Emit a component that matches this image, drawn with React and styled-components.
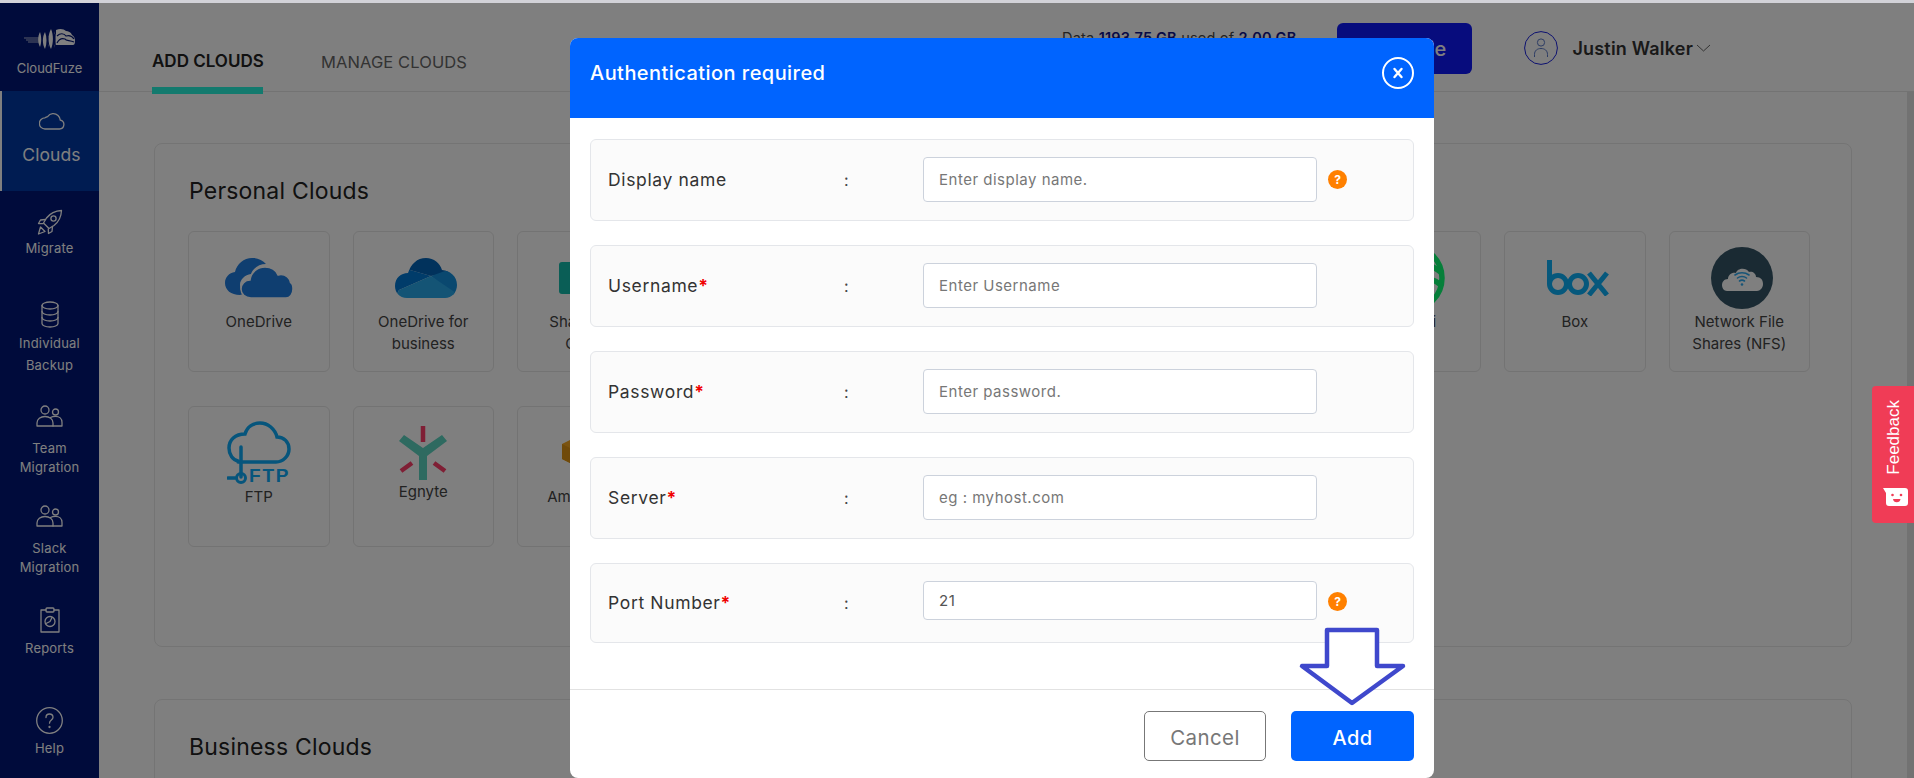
import React from 'react';
import styled, { createGlobalStyle } from 'styled-components';

const Global = createGlobalStyle`
  html, body { margin: 0; padding: 0; background: #fff; }
  body { font-family: Inter, "Noto Sans", sans-serif; color: #333; }
  * { box-sizing: border-box; }
`;

const Page = styled.div`
  position: relative;
  width: 1914px;
  height: 778px;
  overflow: hidden;
  display: flex;
  flex-direction: column;
`;

const TopStrip = styled.div`
  height: 3px;
  flex: none;
  background: #d2d2d8;
`;

const Shell = styled.div`
  flex: 1;
  display: flex;
  min-height: 0;
`;

const Sidebar = styled.nav`
  width: 99px;
  flex: none;
  background: #001676;
  color: #fff;
  display: flex;
  flex-direction: column;
  align-items: stretch;
`;

const LogoBlock = styled.div`
  height: 88px;
  padding-top: 25px;
  display: flex;
  flex-direction: column;
  align-items: center;
  gap: 10px;
  font-size: 13px;
  line-height: 16px;
`;

const ActiveItem = styled.div`
  height: 100px;
  border-left: 2px solid #fff;
  padding: 21px 0 0 2px;
  background: #0038a4;
  display: flex;
  flex-direction: column;
  align-items: center;
  gap: 14px;
  font-size: 17.5px;
  line-height: 21px;
  letter-spacing: 0.1px;
`;

const NavItem = styled.div`
  margin-top: ${p => p.$mt}px;
  display: flex;
  flex-direction: column;
  align-items: center;
  text-align: center;
  gap: ${p => p.$gap || 4}px;
  font-size: 13px;
  line-height: ${p => p.$lh || 19}px;
  letter-spacing: 0.2px;
`;

const Main = styled.div`
  flex: 1;
  min-width: 0;
  display: flex;
  flex-direction: column;
`;

const Header = styled.header`
  height: 89px;
  flex: none;
  border-bottom: 1px solid #e6e6e6;
  display: flex;
  align-items: flex-start;
  padding: 0 203px 0 53px;
`;

const Tab = styled.div`
  height: 91px;
  width: ${p => p.$w}px;
  margin-right: ${p => p.$mr || 0}px;
  padding-top: ${p => (p.$active ? 47 : 48)}px;
  font-size: ${p => (p.$active ? 17 : 16.5)}px;
  letter-spacing: ${p => (p.$active ? 0 : 0.1)}px;
  line-height: 22px;
  white-space: nowrap;
  color: ${p => (p.$active ? '#222' : '#666')};
  font-weight: ${p => (p.$active ? 600 : 400)};
  border-bottom: ${p => (p.$active ? '7px solid #26f4dc' : 'none')};
  position: relative;
  z-index: 1;
`;

const DataUse = styled.div`
  margin-left: auto;
  margin-top: 26px;
  font-size: 14.5px;
  line-height: 18px;
  color: #444;
  white-space: nowrap;
  letter-spacing: 0.2px;
  b { color: #10148c; font-weight: 600; }
`;

const UpgradeBtn = styled.button`
  margin: 20px 52px 0 41px;
  width: 135px;
  height: 51px;
  border: none;
  border-radius: 6px;
  background: #0e18fa;
  color: #fff;
  font: 500 20px Inter, sans-serif;
`;

const UserBox = styled.div`
  margin-top: 28px;
  display: flex;
  align-items: center;
  height: 34px;
  gap: 14px;
  font-size: 18px;
  font-weight: 600;
  color: #333;
  letter-spacing: 0.2px;
  span { display: inline-flex; align-items: center; gap: 3px; white-space: nowrap; }
`;

const Body = styled.div`
  flex: 1;
  display: flex;
  min-height: 0;
`;

const Content = styled.div`
  flex: 1;
  min-width: 0;
  padding: 51px 55px 0;
  display: flex;
  flex-direction: column;
  gap: 52px;
`;

const Scrollbar = styled.div`
  width: 7px;
  flex: none;
  background: #e4e4e4;
`;

const Panel = styled.section`
  flex: none;
  height: ${p => p.$h}px;
  border: 1px solid #e8e8e8;
  border-radius: 8px;
  padding: 30px 33px 0;
`;

const PanelTitle = styled.h2`
  margin: 0 0 23px 1px;
  font-size: 23px;
  line-height: 34px;
  font-weight: 400;
  color: #222;
  letter-spacing: 0.2px;
`;

const CardGrid = styled.div`
  display: grid;
  grid-template-columns: repeat(10, 141.5px);
  grid-auto-rows: 141px;
  column-gap: 23px;
  row-gap: 34px;
`;

const Card = styled.div`
  border: 1px solid #e6e6e6;
  border-radius: 6px;
  padding-top: 14px;
  display: flex;
  flex-direction: column;
  align-items: center;
  text-align: center;
`;

const CardIcon = styled.div`
  height: 63px;
  flex: none;
  display: flex;
  align-items: center;
  justify-content: center;
  margin-left: ${p => p.$dx || 0}px;
  margin-bottom: ${p => (p.$mb === undefined ? 2 : p.$mb)}px;
`;

const CardLabel = styled.div`
  font-size: 15px;
  line-height: 22px;
  color: #444;
  width: 124px;
`;

const Dim = styled.div`
  position: absolute;
  left: 0;
  right: 0;
  top: 3px;
  bottom: 0;
  background: rgba(0, 0, 0, 0.5);
  z-index: 5;
`;

const Modal = styled.div`
  position: absolute;
  left: 570px;
  top: 38px;
  width: 864px;
  height: 740px;
  background: #fff;
  border-radius: 8px;
  z-index: 6;
  display: flex;
  flex-direction: column;
  overflow: hidden;
`;

const ModalHead = styled.div`
  height: 80px;
  flex: none;
  background: #0064ff;
  color: #fff;
  padding: 0 20px 10px;
  display: flex;
  align-items: center;
  justify-content: space-between;
  font-size: 20px;
  font-weight: 500;
  letter-spacing: 0.45px;
`;

const CloseBtn = styled.button`
  width: 32px;
  height: 32px;
  padding: 0;
  border: 2.5px solid #fff;
  border-radius: 50%;
  background: none;
  display: flex;
  align-items: center;
  justify-content: center;
`;

const ModalBody = styled.div`
  flex: 1;
  padding: 21px 20px 0;
  display: flex;
  flex-direction: column;
  gap: 24px;
`;

const FieldRow = styled.div`
  height: ${p => (p.$compact ? 80 : 82)}px;
  flex: none;
  padding: 0 16px 0 17px;
  background: #fbfbfb;
  border: 1px solid #e4e6ea;
  border-radius: 6px;
  display: grid;
  grid-template-columns: 236px 79px 394px 20px;
  align-items: center;
`;

const FieldLabel = styled.div`
  font-size: 17.5px;
  line-height: 22px;
  color: #333;
  letter-spacing: 0.65px;
  white-space: nowrap;
  i { color: #f00000; font-style: normal; font-weight: 700; }
`;

const Colon = styled.div`
  font-size: 16px;
  color: #444;
`;

const TextInput = styled.input`
  width: 394px;
  height: ${p => (p.$compact ? 39 : 45)}px;
  margin-top: ${p => (p.$compact ? -5 : -1)}px;
  padding: 0 12px 0 15px;
  border: 1px solid #ccd2dc;
  border-radius: 4px;
  background: #fff;
  outline: none;
  font: 400 15px Inter, sans-serif;
  letter-spacing: 0.5px;
  color: #555;
  &::placeholder { color: #777; opacity: 1; }
`;

const HelpDot = styled.div`
  width: 19px;
  height: 19px;
  margin: ${p => (p.$compact ? -4 : -2)}px 0 0 11px;
  border-radius: 50%;
  background: #ff8000;
  color: #fff;
  font-size: 12px;
  font-weight: 700;
  line-height: 19px;
  text-align: center;
`;

const ModalFoot = styled.div`
  height: 89px;
  flex: none;
  border-top: 1px solid #e2e2e2;
  padding: 21px 20px 0;
  display: flex;
  justify-content: flex-end;
  gap: 25px;
`;

const FootBtn = styled.button`
  width: ${p => (p.$primary ? 123 : 122)}px;
  height: 50px;
  padding: 3px 0 0;
  border-radius: 5px;
  border: ${p => (p.$primary ? 'none' : '1px solid #777')};
  background: ${p => (p.$primary ? '#0064ff' : '#fff')};
  color: ${p => (p.$primary ? '#fff' : '#777')};
  font: ${p => (p.$primary ? '500 20px' : '400 20.5px')} Inter, sans-serif;
  letter-spacing: 0.4px;
`;

const ArrowMark = styled.svg`
  position: absolute;
  left: 728px;
  top: 588px;
`;

const Feedback = styled.div`
  position: absolute;
  right: 0;
  top: 386px;
  width: 42px;
  height: 137px;
  z-index: 7;
  background: #f03c56;
  border-radius: 4px 0 0 4px;
  padding: 14px 0 0 11px;
  display: flex;
  flex-direction: column;
  align-items: flex-start;
  gap: 13px;
  color: #fff;
  font: 400 17px/21px "Liberation Sans", Arial, sans-serif;
`;

const FeedbackText = styled.span`
  writing-mode: vertical-rl;
  transform: rotate(180deg);
`;

const stroke = { fill: 'none', stroke: 'currentColor', strokeWidth: 1.3, strokeLinecap: 'round', strokeLinejoin: 'round' };

const Logo = () => (
  <svg width="52" height="22" viewBox="0 0 52 22">
    <g stroke="#fff" strokeWidth="0.7">
      <path d="M0 10h15M2 12h13M4 14h11" />
    </g>
    <g fill="#fff">
      <path d="M16 4c-2.400 4-2.400 11 0 15 1.600-4 1.600-11 0-15z" />
      <path d="M21 4c-2.800 5-2.800 12 0 17 2-5 2-12 0-17zM24 6c1.600 4 1.600 10 0 14 2-4 2-10 0-14z" />
      <path d="M27 1c-3.200 6-3.200 14 0 20 2.600-6 2.600-14 0-20zM30 3c2 5 2 12 0 17 2.600-5 2.600-12 0-17z" />
      <path d="M32 2c4-2 8-1 10 1 2 0 5 1 6 4 2 1 3 3 3 6s-1 4-2 4H32z" />
    </g>
    <g fill="none" stroke="#001676" strokeWidth="1.2">
      <path d="M33 8c3-3 7-3 9 0 3-1 6 0 8 3" />
      <path d="M33 15c2-4 5-5 8-4 1 2 5 1 9 3" />
    </g>
  </svg>
);

const CloudLine = () => (
  <svg width="26" height="18" viewBox="0 0 26 18" {...stroke}>
    <path d="M6 17h14.500a4.500 4.500 0 0 0 .8-8.900 7 7 0 0 0-2.300-4.600A7 7 0 0 0 8.600 4.600 6 6 0 0 0 6 5.800 5.500 5.500 0 0 0 6 17z" />
  </svg>
);

const RocketLine = () => (
  <svg width="26" height="26" viewBox="0 0 26 26" {...stroke}>
    <path d="M24.500 1.500c-6.500.3-11.500 3-15 7.500l-3 5 5.500 5.500 5-3c4.500-3.500 7.200-8.500 7.500-15z" />
    <circle cx="16.500" cy="9.500" r="2.600" />
    <path d="M8.500 10.500l-5 .5-2 3.500 4.500.2M15.500 17.500l-.5 5-3.500 2-.2-4.500" />
    <path d="M3.500 18l4.500 4.500-6.500 2.500z" />
  </svg>
);

const DatabaseLine = () => (
  <svg width="18" height="27" viewBox="0 0 18 27" {...stroke}>
    <ellipse cx="9" cy="4.500" rx="8" ry="3.500" />
    <path d="M1 4.500v18c0 2 3.600 3.500 8 3.500s8-1.500 8-3.500v-18" />
    <path d="M1 10.500c0 2 3.600 3.500 8 3.500s8-1.500 8-3.500M1 16.500c0 2 3.600 3.500 8 3.500s8-1.500 8-3.500" />
  </svg>
);

const PeopleLine = () => (
  <svg width="27" height="22" viewBox="0 0 27 22" {...stroke}>
    <circle cx="9" cy="5" r="4" />
    <circle cx="19.500" cy="7" r="3" />
    <path d="M1 21v-3c0-4 3.500-6.500 8-6.500s8 2.500 8 6.500v3z" />
    <path d="M14.500 12.500c1.400-.8 3-1.100 5-1.100 3.800 0 6.500 2.500 6.500 6V21h-9" />
  </svg>
);

const ReportLine = () => (
  <svg width="20" height="26" viewBox="0 0 20 26" {...stroke}>
    <path d="M6 3H1v22h18V3h-5" />
    <rect x="6" y="1" width="8" height="4" rx="1" />
    <circle cx="10" cy="14.500" r="5" />
    <path d="M10 14.500l2-4M10 14.500l-4 2" />
  </svg>
);

const HelpLine = () => (
  <svg width="27" height="27" viewBox="0 0 27 27" {...stroke}>
    <circle cx="13.500" cy="13.500" r="12.800" />
    <path d="M10 10.500c0-2.200 1.500-3.500 3.500-3.500s3.500 1.300 3.500 3.200c0 2.800-3.500 2.800-3.500 6" />
    <circle cx="13.500" cy="20" r="0.500" />
  </svg>
);

const OneDriveIcon = () => (
  <svg width="68" height="41" viewBox="0 0 68 41">
    <path fill="#1e7ce0" d="M15 38C6 38 0 33 0 26c0-6 4-10 10-11 2-9 10-15 19-14 5 .5 9 2.500 12 6-7 0-13 4-15 10-6 1-11 5-11 11 0 4 1 7 3 9z" />
    <path fill="#1e7ce0" stroke="#fff" strokeWidth="1.500" d="M26 41c-6 0-10-4-10-9s4-9 9-9c1-8 8-13 15-13 6 0 11 3 13 8 1 0 2-.5 3-.5 5 0 9 4 9.500 8 2 1 2.500 3.500 2.500 6.500 0 5-3 9-7 9z" />
  </svg>
);

const OneDriveBizIcon = () => (
  <svg width="62" height="40" viewBox="0 0 62 40">
    <clipPath id="od-biz">
      <path d="M12 40C4 40 0 34 0 28 0 20 6 15 13 15 16 6 22 0 31 0 39 0 45 5 47 12 55 13 62 18 62 27 62 34 57 40 50 40z" />
    </clipPath>
    <g clipPath="url(#od-biz)">
      <path fill="#0364b8" d="M0 0h62v13L36 18 15 12z" />
      <path fill="#0078d4" d="M0 0L15 12 36 18 4 32 0 40z" />
      <path fill="#1490df" d="M62 5V40L36 18 50 13z" />
      <path fill="#28a8ea" d="M0 40L4 32 36 18 61 35 62 40z" />
    </g>
  </svg>
);

const SharePointIcon = () => (
  <svg width="57" height="32" viewBox="0 0 57 32">
    <rect width="32" height="32" rx="3" fill="#14bcac" />
    <circle cx="40" cy="16" r="16" fill="#16b5a2" />
  </svg>
);

const WasabiIcon = () => (
  <svg width="70" height="70" viewBox="0 0 70 70" fill="none" stroke="#0cff74" strokeWidth="5.500">
    <circle cx="35" cy="35" r="32" />
    <path d="M8 10C25 20 45 12 67 30M6 46C25 36 45 26 66 42" />
  </svg>
);

const BoxIcon = () => (
  <svg width="68" height="36" viewBox="-6 0 68 36" fill="none" stroke="#0cb0f8" strokeWidth="5">
    <path d="M2.500 0v24" />
    <circle cx="11" cy="24" r="8.500" />
    <circle cx="31" cy="24" r="8.500" />
    <path d="M42 13l18 22M60 13L42 35" />
  </svg>
);

const NfsIcon = () => (
  <svg width="62" height="62" viewBox="0 0 62 62">
    <circle cx="31" cy="31" r="31" fill="#345466" />
    <path fill="#fff" d="M16 44c-3 0-5-3-5-6s2-6 6-6c0-4 4-7 8-6 1-5 10-6 13-1 3-1 7 1 7 5 5 0 7 3 7 7s-3 7-6 7z" />
    <g fill="none" stroke="#2ea8ee" strokeWidth="1.600" strokeLinecap="round">
      <path d="M24 28c4-3 10-3 14 0M26.500 31c2.500-2 6.500-2 9 0M28.500 34c1.500-1 3.500-1 5 0" />
    </g>
    <circle cx="31" cy="37.500" r="1.300" fill="#2ea8ee" />
  </svg>
);

const FtpIcon = () => (
  <svg width="64" height="63" viewBox="0 0 64 63">
    <path fill="none" stroke="#0caaf8" strokeWidth="3.500" strokeLinecap="round" d="M11 41H49c7 0 13-6 13-13 0-7-5-12-12-12-2-8-9-14-17-14-7 0-13 4-15 11C8 13 2 19 2 27c0 7 4 12 9 13" />
    <path fill="none" stroke="#0caaf8" strokeWidth="3.500" strokeLinecap="round" d="M14 26v30M1 57h7" />
    <circle cx="14" cy="57" r="4.500" fill="none" stroke="#0caaf8" strokeWidth="3" />
    <text x="22" y="61" fill="#0caaf8" fontFamily="Liberation Sans, sans-serif" fontWeight="700" fontSize="19" letterSpacing="1.800">FTP</text>
  </svg>
);

const EgnyteIcon = () => (
  <svg width="48" height="54" viewBox="0 0 48 54">
    <path fill="#5cd4c0" d="M0 15l5-6 19 13L43 9l5 6-20 15v24h-8V30z" />
    <g stroke="#ff3e6a" strokeWidth="4.500">
      <path d="M24 0v16M2 45l11-8M46 45l-11-8" />
    </g>
  </svg>
);

const AmazonIcon = () => (
  <svg width="56" height="50" viewBox="0 0 56 50">
    <path fill="#f5a623" d="M2 16l10-5 10 5v15l-10 5-10-5z" />
    <path fill="#e09414" d="M12 21v15L2 31V16z" />
  </svg>
);

const personal = [
  { name: 'OneDrive', icon: <OneDriveIcon /> },
  { name: 'OneDrive for business', icon: <OneDriveBizIcon />, dx: 6 },
  { name: 'SharePoint Online', icon: <SharePointIcon /> },
  { name: 'Dropbox' },
  { name: 'Google Drive' },
  { name: 'pCloud' },
  { name: 'Yandex' },
  { name: 'Wasabi', icon: <WasabiIcon /> },
  { name: 'Box', icon: <BoxIcon /> },
  { name: 'Network File Shares (NFS)', icon: <NfsIcon />, dx: 6 },
  { name: 'FTP', icon: <FtpIcon /> },
  { name: 'Egnyte', icon: <EgnyteIcon />, mb: -3 },
  { name: 'Amazon S3', icon: <AmazonIcon /> },
];

const fields = [
  { label: 'Display name', placeholder: 'Enter display name.', help: true },
  { label: 'Username', placeholder: 'Enter Username', req: true },
  { label: 'Password', placeholder: 'Enter password.', req: true },
  { label: 'Server', placeholder: 'eg : myhost.com', req: true },
  { label: 'Port Number', value: '21', req: true, help: true, compact: true },
];

export default function App() {
  return (
    <Page>
      <Global />
      <TopStrip />
      <Shell>
        <Sidebar>
          <LogoBlock>
            <Logo />
            CloudFuze
          </LogoBlock>
          <ActiveItem>
            <CloudLine />
            Clouds
          </ActiveItem>
          <NavItem $mt={18}>
            <RocketLine />
            Migrate
          </NavItem>
          <NavItem $mt={43} $lh={22}>
            <DatabaseLine />
            <div>Individual<br />Backup</div>
          </NavItem>
          <NavItem $mt={29} $gap={12}>
            <PeopleLine />
            <div>Team<br />Migration</div>
          </NavItem>
          <NavItem $mt={28} $gap={12}>
            <PeopleLine />
            <div>Slack<br />Migration</div>
          </NavItem>
          <NavItem $mt={30} $gap={6}>
            <ReportLine />
            Reports
          </NavItem>
          <NavItem $mt={49} $gap={5}>
            <HelpLine />
            Help
          </NavItem>
        </Sidebar>
        <Main>
          <Header>
            <Tab $active $w={111} $mr={58}>ADD CLOUDS</Tab>
            <Tab $w={150}>MANAGE CLOUDS</Tab>
            <DataUse>Data <b>1193.75 GB</b> used of <b>2.00 GB</b></DataUse>
            <UpgradeBtn>Upgrade</UpgradeBtn>
            <UserBox>
              <svg width="34" height="34" viewBox="0 0 34 34" fill="none" stroke="#1a22e0" strokeWidth="1">
                <circle cx="17" cy="17" r="16.400" />
                <circle cx="17" cy="11.500" r="3.600" stroke="#5a78c8" />
                <path d="M10.500 26v-2.500c0-4 2.800-6 6.500-6s6.500 2 6.500 6V26" stroke="#5a78c8" />
              </svg>
              <span>
                Justin Walker
                <svg width="15" height="8" viewBox="0 0 15 8" fill="none" stroke="#666" strokeWidth="1">
                  <path d="M1 1l6.500 6L14 1" />
                </svg>
              </span>
            </UserBox>
          </Header>
          <Body>
            <Content>
              <Panel $h={504}>
                <PanelTitle>Personal Clouds</PanelTitle>
                <CardGrid>
                  {personal.map(c => (
                    <Card key={c.name}>
                      <CardIcon $mb={c.mb} $dx={c.dx}>{c.icon}</CardIcon>
                      <CardLabel>{c.name}</CardLabel>
                    </Card>
                  ))}
                </CardGrid>
              </Panel>
              <Panel $h={300}>
                <PanelTitle>Business Clouds</PanelTitle>
              </Panel>
            </Content>
            <Scrollbar />
          </Body>
        </Main>
      </Shell>
      <Dim />
      <Modal>
        <ModalHead>
          Authentication required
          <CloseBtn aria-label="Close">
            <svg width="12" height="12" viewBox="0 0 12 12" stroke="#fff" strokeWidth="2.400" strokeLinecap="round">
              <path d="M2.500 2l7 8M9.500 2l-7 8" />
            </svg>
          </CloseBtn>
        </ModalHead>
        <ModalBody>
          {fields.map(f => (
            <FieldRow key={f.label} $compact={f.compact}>
              <FieldLabel>{f.label}{f.req && <i>*</i>}</FieldLabel>
              <Colon>:</Colon>
              <TextInput $compact={f.compact} placeholder={f.placeholder} defaultValue={f.value} />
              {f.help && <HelpDot $compact={f.compact}>?</HelpDot>}
            </FieldRow>
          ))}
        </ModalBody>
        <ModalFoot>
          <FootBtn>Cancel</FootBtn>
          <FootBtn $primary>Add</FootBtn>
        </ModalFoot>
        <ArrowMark width="110" height="82" viewBox="0 0 110 82">
          <path d="M29 4H79V40H105L54 77 4 40H29z" fill="#fff" stroke="#3f48cc" strokeWidth="4.500" strokeLinejoin="round" />
        </ArrowMark>
      </Modal>
      <Feedback>
        <FeedbackText>Feedback</FeedbackText>
        <svg width="25" height="18" viewBox="0 0 25 18">
          <path fill="#fff" d="M0 0h22a3 3 0 0 1 3 3v12a3 3 0 0 1-3 3H6a3 3 0 0 1-3-3V5z" />
          <circle cx="9.500" cy="7" r="1.300" fill="#f03c56" />
          <circle cx="18" cy="7" r="1.300" fill="#f03c56" />
          <path d="M10 11h7.500a3.800 3.800 0 0 1-7.500 0z" fill="#f03c56" />
        </svg>
      </Feedback>
    </Page>
  );
}
